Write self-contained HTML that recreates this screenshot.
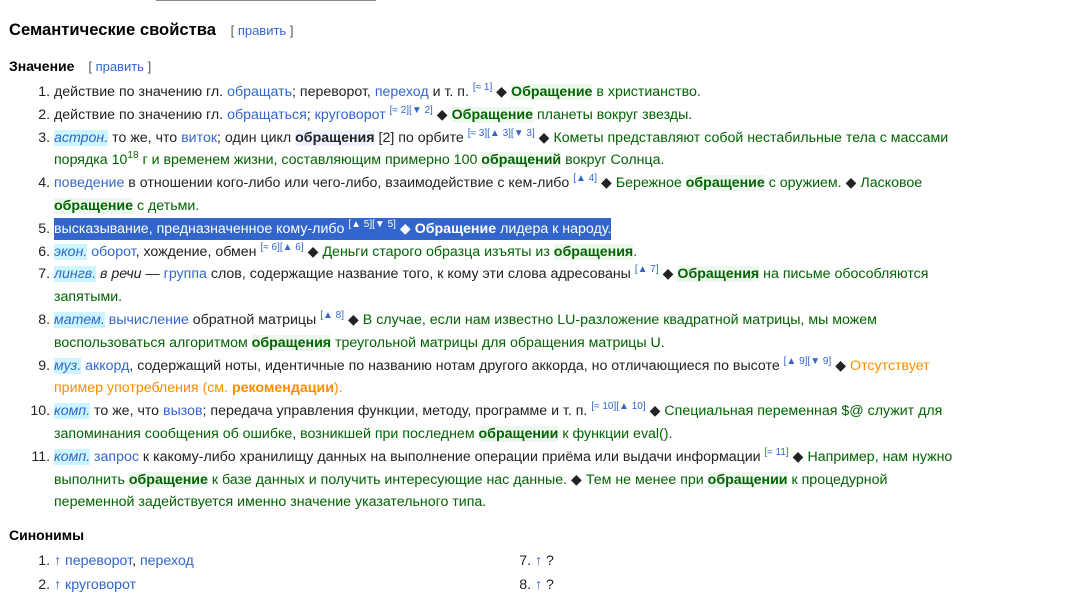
<!DOCTYPE html>
<html><head><meta charset="utf-8"><style>
body{margin:0;width:1082px;height:589px;overflow:hidden;background:#fff;font-family:"Liberation Sans",sans-serif;color:#222;font-size:14.2px}
.wrap{position:relative}
.bar{position:absolute;left:156px;top:0;width:220px;height:1px;background:#888}
h2{font-size:16.6px;font-weight:bold;margin:0;position:absolute;top:20px;left:9px;color:#000}
h3{font-size:14px;font-weight:bold;margin:0;position:absolute;left:9px;color:#000}
.ed{font-weight:normal;font-size:13px;color:#555;margin-left:10px}
.ed a{color:#36c}
a{color:#36c;text-decoration:none}
ol{margin:0;padding-left:45px;position:absolute;left:9px;line-height:22.8px;width:900px}
sup{font-size:10px;color:#36c;vertical-align:6px;line-height:0}
.g{color:#006400}
.o{color:#ff8c00}
.b{font-weight:bold;background:#eef3ff}
.gb{font-weight:bold;background:#eef7ee}
.l{background:#ccf6ff;font-style:italic;color:#36c}
.sel{background:#3366cc;color:#fff;padding:3px 0}
.sel sup{color:#fff}
</style></head><body><div class="wrap">
<div class="bar"></div>
<h2>Семантические свойства <span class="ed">[ <a>править</a> ]</span></h2>
<h3 style="top:58px">Значение <span class="ed">[ <a>править</a> ]</span></h3>
<ol style="top:81px">
<li>действие по значению гл. <a>обращать</a>; переворот, <a>переход</a> и т. п. <sup>[≈ 1]</sup> ◆ <span class="g"><span class="gb">Обращение</span> в христианство.</span></li>
<li>действие по значению гл. <a>обращаться</a>; <a>круговорот</a> <sup>[≈ 2][▼ 2]</sup> ◆ <span class="g"><span class="gb">Обращение</span> планеты вокруг звезды.</span></li>
<li><span class="l">астрон.</span> то же, что <a>виток</a>; один цикл <span class="b">обращения</span> [2] по орбите <sup>[≈ 3][▲ 3][▼ 3]</sup> ◆ <span class="g">Кометы представляют собой нестабильные тела с массами порядка 10<sup style="color:#006400">18</sup> г и временем жизни, составляющим примерно 100 <span class="gb">обращений</span> вокруг Солнца.</span></li>
<li><a>поведение</a> в отношении кого-либо или чего-либо, взаимодействие с кем-либо <sup>[▲ 4]</sup> ◆ <span class="g">Бережное <span class="gb">обращение</span> с оружием.</span> ◆ <span class="g">Ласковое <span class="gb">обращение</span> с детьми.</span></li>
<li><span class="sel">высказывание, предназначенное кому-либо <sup>[▲ 5][▼ 5]</sup> ◆ <b>Обращение</b> лидера к народу.</span></li>
<li><span class="l">экон.</span> <a>оборот</a>, хождение, обмен <sup>[≈ 6][▲ 6]</sup> ◆ <span class="g">Деньги старого образца изъяты из <span class="gb">обращения</span>.</span></li>
<li><span class="l">лингв.</span> <i>в речи</i> — <a>группа</a> слов, содержащие название того, к кому эти слова адресованы <sup>[▲ 7]</sup> ◆ <span class="g"><span class="gb">Обращения</span> на письме обособляются запятыми.</span></li>
<li><span class="l">матем.</span> <a>вычисление</a> обратной матрицы <sup>[▲ 8]</sup> ◆ <span class="g">В случае, если нам известно LU-разложение квадратной матрицы, мы можем воспользоваться алгоритмом <span class="gb">обращения</span> треугольной матрицы для обращения матрицы U.</span></li>
<li><span class="l">муз.</span> <a>аккорд</a>, содержащий ноты, идентичные по названию нотам другого аккорда, но отличающиеся по высоте <sup>[▲ 9][▼ 9]</sup> ◆ <span class="o">Отсутствует пример употребления (см. <b>рекомендации</b>).</span></li>
<li><span class="l">комп.</span> то же, что <a>вызов</a>; передача управления функции, методу, программе и т. п. <sup>[≈ 10][▲ 10]</sup> ◆ <span class="g">Специальная переменная $@ служит для запоминания сообщения об ошибке, возникшей при последнем <span class="gb">обращении</span> к функции eval().</span></li>
<li><span class="l">комп.</span> <a>запрос</a> к какому-либо хранилищу данных на выполнение операции приёма или выдачи информации <sup>[≈ 11]</sup> ◆ <span class="g">Например, нам нужно выполнить <span class="gb">обращение</span> к базе данных и получить интересующие нас данные.</span> ◆ <span class="g">Тем не менее при <span class="gb">обращении</span> к процедурной переменной задействуется именно значение указательного типа.</span></li>
</ol>
<h3 style="top:527px">Синонимы</h3>
<ol style="top:549px;width:400px;line-height:24px">
<li><a>↑ переворот</a>, <a>переход</a></li>
<li><a>↑ круговорот</a></li>
</ol>
<ol start="7" style="top:549px;left:490px;width:200px;line-height:24px">
<li><a>↑</a> ?</li>
<li><a>↑</a> ?</li>
</ol>
</div></body></html>
